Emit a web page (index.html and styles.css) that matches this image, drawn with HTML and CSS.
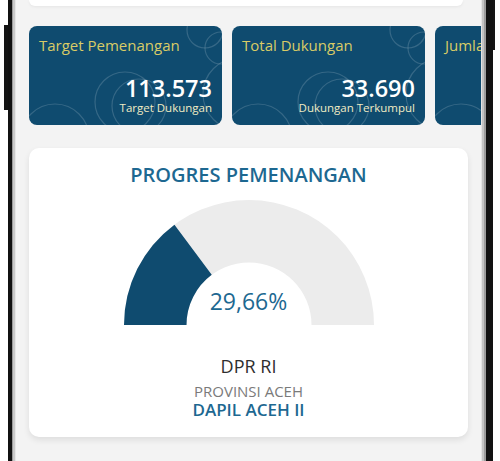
FILE: index.html
```html
<!DOCTYPE html>
<html lang="id">
<head>
<meta charset="utf-8">
<title>Progres Pemenangan</title>
<link rel="stylesheet" href="styles.css">
</head>
<body>
<div class="device">
  <div class="edge edge-left"><div class="btn btn-left"></div></div>
  <div class="bezel bezel-left"></div>
  <div class="screen">
    <div class="top-card"></div>
    <div class="stats">
      <div class="stat">
        <svg class="rings" viewBox="0 0 193 99" width="193" height="99" aria-hidden="true">
          <circle cx="176" cy="4" r="18"/><circle cx="192" cy="22" r="16"/><circle cx="210" cy="68" r="36"/>
          <circle cx="96" cy="76" r="30"/><circle cx="110" cy="80" r="27"/><circle cx="26" cy="112" r="34"/>
        </svg>
        <div class="stat-title">Target Pemenangan</div>
        <div class="stat-body">
          <div class="stat-value">113.573</div>
          <div class="stat-sub">Target Dukungan</div>
        </div>
      </div>
      <div class="stat">
        <svg class="rings" viewBox="0 0 193 99" width="193" height="99" aria-hidden="true">
          <circle cx="176" cy="4" r="18"/><circle cx="192" cy="22" r="16"/><circle cx="210" cy="68" r="36"/>
          <circle cx="96" cy="76" r="30"/><circle cx="110" cy="80" r="27"/><circle cx="26" cy="112" r="34"/>
        </svg>
        <div class="stat-title">Total Dukungan</div>
        <div class="stat-body">
          <div class="stat-value">33.690</div>
          <div class="stat-sub">Dukungan Terkumpul</div>
        </div>
      </div>
      <div class="stat stat-peek">
        <svg class="rings" viewBox="0 0 193 99" width="193" height="99" aria-hidden="true">
          <circle cx="176" cy="4" r="18"/><circle cx="192" cy="22" r="16"/><circle cx="210" cy="68" r="36"/>
          <circle cx="96" cy="76" r="30"/><circle cx="110" cy="80" r="27"/><circle cx="26" cy="112" r="34"/>
        </svg>
        <div class="stat-title">Jumla</div>
      </div>
    </div>
    <div class="progress-card">
      <h2 class="progress-title">PROGRES PEMENANGAN</h2>
      <div class="gauge">
        <svg viewBox="0 0 250 125" width="250" height="125" aria-hidden="true">
          <path class="g-track" d="M0,125 A125,125 0 0 1 250,125 L187.5,125 A62.5,62.5 0 0 0 62.5,125 Z"/>
          <path class="g-fill" d="M0,125 A125,125 0 0 1 50.46,24.65 L87.73,74.82 A62.5,62.5 0 0 0 62.5,125 Z"/>
        </svg>
        <div class="gauge-value">29,66%</div>
      </div>
      <div class="office">DPR RI</div>
      <div class="province">PROVINSI ACEH</div>
      <div class="dapil">DAPIL ACEH II</div>
    </div>
  </div>
  <div class="bezel bezel-right"></div>
  <div class="edge edge-right"><div class="btn btn-right"></div></div>
</div>
</body>
</html>
```

FILE: styles.css
```css
* { box-sizing: border-box; }
html, body { margin: 0; padding: 0; background: #ffffff; }
body { font-family: "Open Sans", "Noto Sans", sans-serif; }

.device {
  display: flex;
  align-items: flex-start;
  width: 500px;
  height: 461px;
  overflow: hidden;
}
.edge { flex: none; height: 461px; background: #fff; }
.edge-left { width: 8px; padding: 25px 0 0 4px; }
.edge-right { width: 7px; }
.btn { background: #141414; }
.btn-left { width: 5px; height: 85px; }
.btn-right { width: 2px; height: 50px; }

.bezel { flex: none; height: 461px; }
.bezel-left {
  width: 8px;
  background: linear-gradient(to right, #111 0 4px, #9a9a9a 4px 5px, #c9c9c9 5px 7px, #e6e6e6 7px);
}
.bezel-right {
  width: 12px;
  background: linear-gradient(to right, #e4e4e4 0 1px, #c4c4c4 1px 3px, #9c9c9c 3px 5px, #111 5px);
}

.screen {
  flex: none;
  width: 465px;
  height: 461px;
  background: #f3f3f3;
  padding-left: 13px;
  overflow: hidden;
}
.top-card {
  width: 434px;
  height: 6px;
  background: #fff;
  border-radius: 0 0 8px 8px;
  box-shadow: 0 1px 3px rgba(0,0,0,0.06);
  margin-bottom: 20px;
}

.stats {
  display: flex;
  gap: 10px;
  width: 452px;
  height: 99px;
  overflow: hidden;
}
.stat {
  position: relative;
  flex: none;
  width: 193px;
  height: 99px;
  background: #0f4b6f;
  border-radius: 8px;
  overflow: hidden;
  display: flex;
  flex-direction: column;
  padding: 9px 10px 11px 10px;
}
.stat-peek { width: 60px; border-radius: 8px 0 0 8px; }
.rings {
  position: absolute;
  left: 0;
  top: 0;
  fill: none;
  stroke: rgba(255,255,255,0.16);
  stroke-width: 1.2;
}
.stat-title {
  position: relative;
  font-size: 15px;
  line-height: 20px;
  color: #d9cb66;
  white-space: nowrap;
}
.stat-body {
  position: relative;
  margin-top: auto;
  text-align: right;
}
.stat-value {
  font-size: 23.5px;
  line-height: 24px;
  font-weight: 600;
  color: #ffffff;
}
.stat-sub {
  margin-top: 1px;
  font-size: 11.5px;
  line-height: 13px;
  color: #f1ebc4;
}

.progress-card {
  width: 439px;
  height: 289px;
  margin-top: 23px;
  background: #ffffff;
  border-radius: 10px;
  box-shadow: 0 3px 6px rgba(0,0,0,0.09);
  display: flex;
  flex-direction: column;
  align-items: center;
  padding-top: 14px;
}
.progress-title {
  margin: 0;
  font-size: 20px;
  line-height: 26px;
  font-weight: 600;
  color: #1d6891;
}
.gauge {
  position: relative;
  width: 250px;
  height: 125px;
  margin-top: 12px;
}
.gauge svg { display: block; }
.g-track { fill: #ececec; }
.g-fill { fill: #0f4b6f; }
.gauge-value {
  position: absolute;
  left: 0;
  right: 0;
  bottom: 12px;
  text-align: center;
  font-size: 23px;
  line-height: 23px;
  color: #1d6891;
}
.office {
  margin-top: 29px;
  font-size: 18px;
  line-height: 24px;
  color: #2e2e2e;
}
.province {
  margin-top: 4px;
  font-size: 15px;
  line-height: 18px;
  color: #7a7a7a;
}
.dapil {
  font-size: 17px;
  line-height: 20px;
  font-weight: 600;
  color: #1d6891;
}
```
